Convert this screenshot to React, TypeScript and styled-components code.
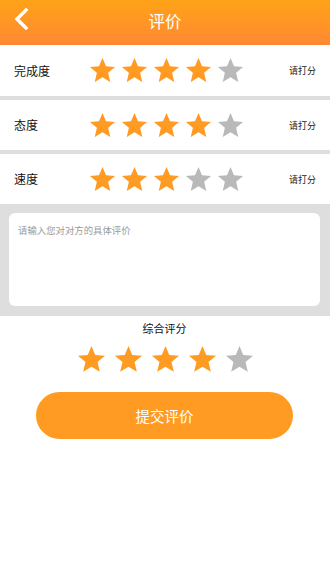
import styled, { createGlobalStyle } from "styled-components";

const GlobalStyle = createGlobalStyle`
  html, body {
    margin: 0;
    padding: 0;
    background: #ffffff;
    font-family: "Liberation Serif", "Noto Sans CJK SC", serif;
  }
`;

const ORANGE = "#ff9a22";
const GRAY = "#b9b9b9";

const Page = styled.div`
  width: 330px;
  height: 566px;
  background: #ffffff;
  display: flex;
  flex-direction: column;
`;

const Header = styled.div`
  height: 45px;
  background: linear-gradient(180deg, #ffa317 0%, #ff8833 100%);
  display: flex;
  align-items: center;
  justify-content: center;
  position: relative;
`;

const BackButton = styled.div`
  position: absolute;
  left: 11px;
  top: 8px;
  width: 20px;
  height: 22px;
  display: flex;
  align-items: center;
  justify-content: center;
`;

const Title = styled.div`
  color: #ffffff;
  font-size: 16.5px;
  margin-top: -3px;
`;

const Sections = styled.div`
  display: flex;
  flex-direction: column;
  gap: 4px;
  background: #dedede;
`;

const RateRow = styled.div<{ $h: number }>`
  height: ${(p) => p.$h}px;
  background: #ffffff;
  display: flex;
  align-items: center;
  padding: 0 14px;
`;

const Label = styled.div`
  width: 75px;
  font-size: 12px;
  color: #111;
`;

const Stars = styled.div<{ $gap: number }>`
  display: flex;
  gap: ${(p) => p.$gap}px;
  flex: 1;
`;

const Hint = styled.div`
  font-size: 9px;
  color: #222;
`;

const CommentArea = styled.div`
  padding: 5px 10px 10px 9px;
`;

const CommentBox = styled.div`
  height: 93px;
  background: #ffffff;
  border-radius: 6px;
  padding: 10px 9px;
  box-sizing: border-box;
  font-size: 9.4px;
  color: #9a9a9a;
`;

const Summary = styled.div`
  display: flex;
  flex-direction: column;
  align-items: center;
  padding-top: 4px;
`;

const SummaryTitle = styled.div`
  font-size: 11px;
  color: #111;
  margin-left: -1px;
`;

const SummaryStars = styled(Stars)`
  flex: none;
  margin-top: 9px;
`;

const SubmitButton = styled.button`
  margin-top: 18px;
  width: 257px;
  height: 47px;
  margin-left: -1px;
  border: none;
  border-radius: 24px;
  background: ${ORANGE};
  color: #ffffff;
  font-family: "Liberation Serif", "Noto Sans CJK SC", serif;
  font-size: 14.5px;
`;

const Star = ({ on, size }: { on: boolean; size: number }) => (
  <svg width={size} height={size} viewBox="0 0 24 24">
    <polygon
      points="12,0.8 15.1,8.2 23.2,8.8 17,14 18.9,22.2 12,17.9 5.1,22.2 7,14 0.8,8.8 8.9,8.2"
      fill={on ? ORANGE : GRAY}
    />
  </svg>
);

const ratings = [
  { label: "完成度", value: 4, h: 51 },
  { label: "态度", value: 4, h: 50 },
  { label: "速度", value: 3, h: 50 },
];

export default function App() {
  return (
    <Page>
      <GlobalStyle />
      <Header>
        <BackButton>
          <svg width="16" height="22" viewBox="0 0 16 22">
            <path
              d="M13 2 L4 11 L13 20"
              stroke="#ffffff"
              strokeWidth="3.4"
              fill="none"
              strokeLinecap="square"
            />
          </svg>
        </BackButton>
        <Title>评价</Title>
      </Header>
      <Sections>
        {ratings.map((r) => (
          <RateRow key={r.label} $h={r.h}>
            <Label>{r.label}</Label>
            <Stars $gap={5}>
              {[1, 2, 3, 4, 5].map((i) => (
                <Star key={i} on={i <= r.value} size={27} />
              ))}
            </Stars>
            <Hint>请打分</Hint>
          </RateRow>
        ))}
        <CommentArea>
          <CommentBox>请输入您对对方的具体评价</CommentBox>
        </CommentArea>
      </Sections>
      <Summary>
        <SummaryTitle>综合评分</SummaryTitle>
        <SummaryStars $gap={8}>
          {[1, 2, 3, 4, 5].map((i) => (
            <Star key={i} on={i <= 4} size={29} />
          ))}
        </SummaryStars>
        <SubmitButton>提交评价</SubmitButton>
      </Summary>
    </Page>
  );
}
